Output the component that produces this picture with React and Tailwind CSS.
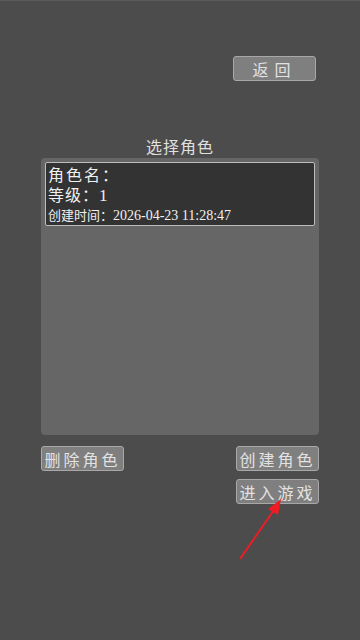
import React from 'react';

const cjk = { fontFamily: '"Noto Sans CJK SC", "Liberation Serif", serif' };
const mixed = { fontFamily: '"Liberation Serif", "Noto Sans CJK SC", serif' };

function Btn({ children, className = '' }) {
  return (
    <button
      style={cjk}
      className={`h-[25px] w-[83px] rounded-[3px] border border-[#a8a8a8] bg-[#7f7f7f] text-[16px] leading-none tracking-[3px] text-[#e2e2e2] flex items-center justify-center ${className}`}
    >
      {children}
    </button>
  );
}

export default function App() {
  return (
    <div className="relative h-[640px] w-[360px] overflow-hidden bg-[#4c4c4c] border-t border-[#5c5c5c]">
      <div className="flex justify-end pr-[44px] pt-[55px]">
        <Btn className="tracking-[6px]">返回</Btn>
      </div>

      <p style={cjk} className="mt-[54px] text-center text-[16px] leading-[22px] tracking-[1px] text-[#e0e0e0]">
        选择角色
      </p>

      <div className="mx-[41px] mt-[1px] h-[277px] w-[278px] rounded-[4px] bg-[#666666] p-[4px]">
        <div className="h-[64px] rounded-[2px] border border-[#bdbdbd] bg-[#333333] px-[2px] pt-[1px] text-[#f0f0f0]">
          <p style={cjk} className="text-[16px] leading-[20px] tracking-[2px]">角色名：</p>
          <p style={mixed} className="text-[17px] leading-[21px]">
            <span style={cjk} className="text-[16px] tracking-[1px]">等级：</span>1
          </p>
          <p style={mixed} className="text-[14px] leading-[18px]">
            <span style={cjk} className="text-[13px]">创建时间：</span>2026-04-23 11:28:47
          </p>
        </div>
      </div>

      <div className="mt-[11px] flex justify-between px-[41px]">
        <Btn>删除角色</Btn>
        <Btn>创建角色</Btn>
      </div>
      <div className="mt-[8px] flex justify-end pr-[41px]">
        <Btn>进入游戏</Btn>
      </div>

      <svg className="absolute left-0 top-0" width="360" height="640" viewBox="0 0 360 640">
        <line x1="240" y1="558" x2="274" y2="509" stroke="#ee1c24" strokeWidth="2" />
        <polygon points="281,498 268,508 278,514" fill="#ee1c24" />
      </svg>
    </div>
  );
}
